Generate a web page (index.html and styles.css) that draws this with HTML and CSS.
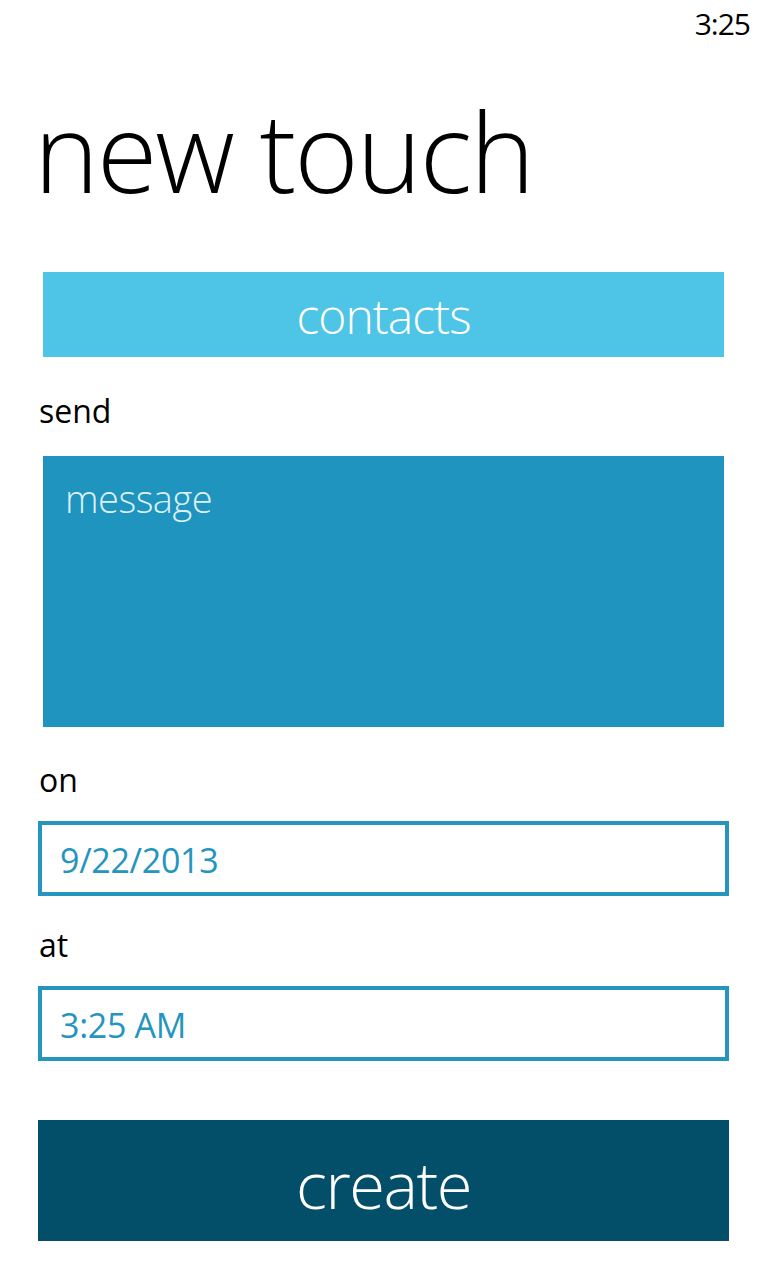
FILE: index.html
```html
<!doctype html>
<html lang="en">

<head>
    <meta charset="UTF-8">
    <meta name="viewport" content="width=device-width, initial-scale=1.0">
    <title>new touch</title>
    <link rel="stylesheet" href="styles.css">
</head>

<body>
    <div class="status">3:25</div>

    <h1 class="title">new touch</h1>

    <div class="form">
        <button class="contacts">contacts</button>

        <div class="label label-send">send</div>
        <div class="message">message</div>

        <div class="label label-on">on</div>
        <div class="field">9/22/2013</div>

        <div class="label label-at">at</div>
        <div class="field">3:25 AM</div>

        <button class="create">create</button>
    </div>
</body>

</html>
```

FILE: styles.css
```css
* {
    font-family: "Open Sans", "Noto Sans", sans-serif;
    box-sizing: border-box;
}

body {
    background-color: #ffffff;
    margin: 0;
    width: 768px;
    height: 1280px;
    color: #000;
    overflow: hidden;
}

.status {
    height: 48px;
    padding: 4px 18px 0 0;
    text-align: right;
    font-size: 30px;
    letter-spacing: -1px;
    line-height: 40px;
}

.title {
    margin: 37px 0 0 34px;
    font-size: 110px;
    font-weight: 300;
    line-height: 130px;
    letter-spacing: -2px;
}

.form {
    display: flex;
    flex-direction: column;
    padding: 0 39px 0 38px;
    margin-top: 57px;
}

button {
    border: none;
    color: #fff;
    font-weight: 300;
    cursor: pointer;
    padding: 0;
}

.contacts {
    margin: 0 5px;
    height: 85px;
    background-color: #4ec4e6;
    font-size: 48px;
    letter-spacing: -1px;
    padding-top: 2px;
}

.label {
    font-size: 32px;
    line-height: 40px;
    margin-left: 1px;
}

.label-send {
    margin-top: 34px;
}

.label-on {
    margin-top: 33px;
}

.label-at {
    margin-top: 29px;
}

.message {
    margin: 25px 5px 0;
    height: 271px;
    background-color: #1e94bf;
    color: #dcf0f8;
    font-size: 38px;
    font-weight: 300;
    letter-spacing: -0.5px;
    padding: 18px 0 0 22px;
    line-height: 48px;
}

.field {
    margin-top: 21px;
    height: 75px;
    border: 4px solid #2594be;
    color: #2594be;
    font-size: 34px;
    letter-spacing: -0.3px;
    padding: 12px 0 0 18px;
    line-height: 46px;
}

.create {
    margin-top: 59px;
    height: 121px;
    background-color: #034f69;
    font-size: 65px;
    letter-spacing: -1.5px;
    padding-top: 6px;
}
```
